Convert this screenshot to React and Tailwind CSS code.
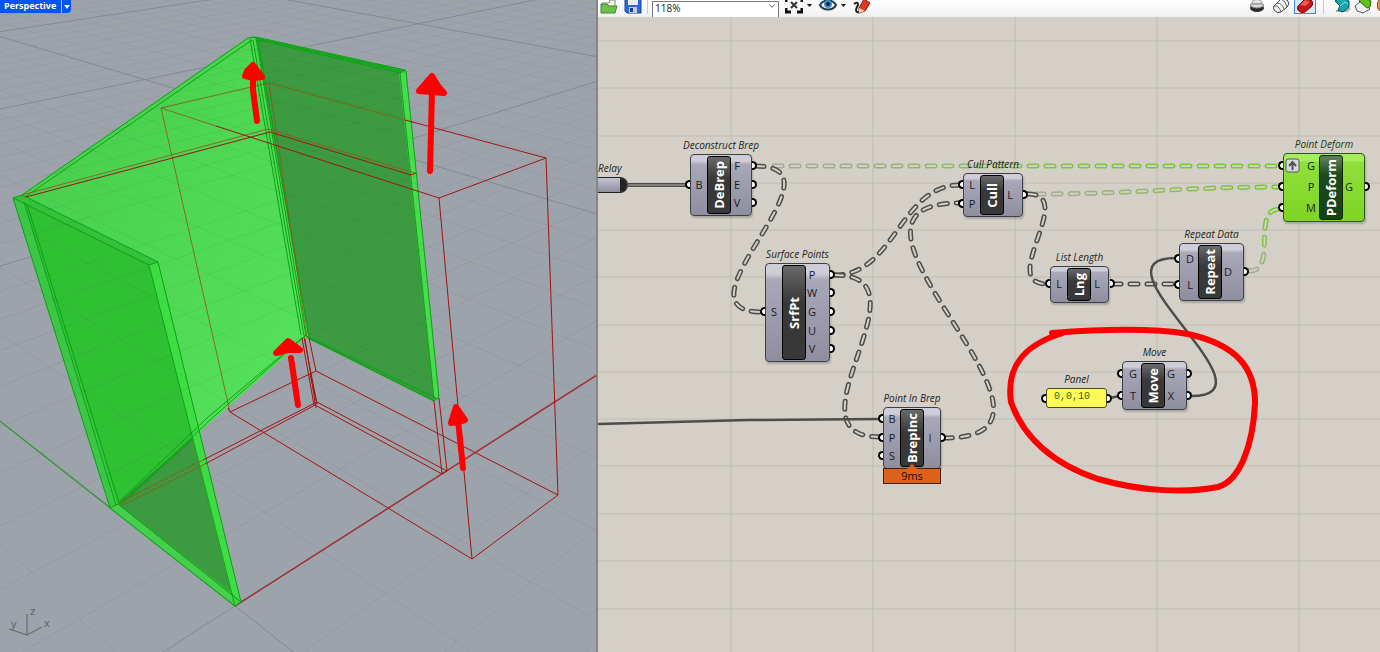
import { ChevronDown } from "lucide-react";

// ground plane: origin, the two vanishing points and the step along each axis
const ORIGIN = [235, 606];
const VP_X = [1490, -195];
const VP_Y = [-786, -197];

const project = (u, v) => {
  const a = u * 0.0741;
  const b = v * 0.0584;
  const d = 1 + a + b;
  return [
    (ORIGIN[0] + a * VP_X[0] + b * VP_Y[0]) / d,
    (ORIGIN[1] + a * VP_X[1] + b * VP_Y[1]) / d,
  ];
};

const segment = (from, to) => {
  const [x1, y1] = project(from[0], from[1]);
  const [x2, y2] = project(to[0], to[1]);
  return `M${x1.toFixed(1)} ${y1.toFixed(1)}L${x2.toFixed(1)} ${y2.toFixed(1)}`;
};

const steps = Array.from({ length: 46 }, (_, i) => i - 5);
const gridPath = (list) =>
  list
    .map((n) => segment([n, -5], [n, 60]) + segment([-5, n], [60, n]))
    .join("");
const minorGrid = gridPath(steps.filter((n) => n % 10 !== 0));
const majorGrid = gridPath(steps.filter((n) => n % 10 === 0 && n > 0));
const axisTails = segment([0, 0], [-5, 0]) + segment([0, 0], [0, -5]);

function Model() {
  return (
    <svg className="absolute inset-0 h-full w-full" aria-hidden="true">
      <defs>
        <linearGradient id="wall" x1="0" y1="0" x2="1" y2="1">
          <stop offset="0" stopColor="#45cb4a" />
          <stop offset="1" stopColor="#58e55e" />
        </linearGradient>
        <linearGradient id="haze" gradientUnits="userSpaceOnUse" x1="0" y1="0" x2="0" y2="300">
          <stop offset="0" stopColor="#8f9299" stopOpacity="0.3" />
          <stop offset="1" stopColor="#8f9299" stopOpacity="0.55" />
        </linearGradient>
      </defs>
      <g fill="none">
        <path d={minorGrid} stroke="url(#haze)" />
        <path d={majorGrid + axisTails} stroke="#7f8289" strokeOpacity="0.8" />
        <path d={segment([0, 0], [20, 0])} stroke="#9c2f36" strokeWidth="1.5" />
        <path d={segment([0, 0], [0, 12])} stroke="#3b9440" strokeWidth="1.5" />
      </g>

      <g stroke="none">
        <polygon points="252,37 405,70 439,398 434,401 306,337" fill="#3c9b40" />
        <polygon points="399,72 406,71 439,397 434,399" fill="#48dc4e" />
        <polygon points="252,37 405,70 400,73 258,41" fill="#2dac32" />
        <polygon points="21,195 248,38 256,38 308,336 118,505" fill="url(#wall)" />
        <polygon points="13,198 22,195 158,262 241,602 235,606 110,508" fill="#2fc033" />
        <polygon points="119,505 193,438 231,592" fill="#3c9b40" />
        <polygon points="13,198 24,202 118,504 110,508" fill="#3dc547" />
        <polygon points="13,198 22,195 158,262 149,265" fill="#36c13d" />
        <polygon points="149,265 158,262 241,602 231,592" fill="#40dc45" />
        <polygon points="110,508 118,504 241,602 235,606" fill="#47ce4d" />
        <polygon points="118,503 193,437 192,441 121,505" fill="#279a2b" />
      </g>

      <g fill="none" stroke="#0aa312">
        <path d="M13 198L22 195L248 38L256 37L405 70L406 71L439 397L434 401L308 338" />
        <path d="M25 197L252 40M258 40L400 73L405 70M252 37L401 71M400 73L434 399" />
        <path d="M250 39L301 335M253 40L304 336M256 38L306 336M258 40L309 337" />
        <path d="M304 335L436 398M308 338L434 401M305 336L210 420M302 338L207 418" />
        <path d="M13 198L149 265L158 262L22 195M13 198L110 508L235 606L241 602L158 262" />
        <path d="M149 265L235 606M24 202L116 505M27 204L119 503M110 508L118 504L241 602" />
        <path d="M118 503L207 418M121 505L210 420" />
      </g>

      {/* ground grid glimpsed through the walls */}
      <clipPath id="walls">
        <path d="M13 198L250 37L405 70L439 398L434 401L306 337L200 430L241 602L235 606L110 508Z" />
      </clipPath>
      <path
        d={minorGrid}
        clipPath="url(#walls)"
        fill="none"
        stroke="#1c6b20"
        strokeOpacity="0.08"
      />

      {/* edges of the untouched boxes seen through the walls */}
      <g fill="none" stroke="#8c5a18" strokeOpacity="0.85">
        <path d="M161 108L269 83L405 120M161 108L230 412M161 108L216 126" />
        <path d="M269 83L307 338M22 195L268 129L415 173" />
        <path d="M118 503L203 460M121 506L205 464" />
      </g>
      <g fill="none" stroke="#a01414">
        <path d="M405 120L546 158L439 198L216 126M546 158L558 495L472 559L439 198" />
        <path d="M26 197L270 132L411 175L416 173" />
        <path d="M228 408L230 412L472 559M558 495L316 371L230 412M309 338L316 371" />
        <path d="M302 338L314 405M304 337L317 404M310 374L317 404M305 339L316 408" />
        <path d="M203 460L317 402L447 471M205 464L315 405L442 474L447 471" />
        <path d="M434 401L442 474M439 398L447 471" />
      </g>

      <g
        fill="#ff0000"
        stroke="#ff0000"
        strokeWidth="6"
        strokeLinecap="round"
        strokeLinejoin="round"
      >
        <path d="M257 121L253 90V76" fill="none" />
        <path d="M253 65L262 77L254 78L245 76L247 71Z" />
        <path d="M430 171L432 90" fill="none" />
        <path d="M432 76L438 86L444 93L432 92L419 91Z" />
        <path d="M298 405L291 358" fill="none" />
        <path d="M288 341L300 350L288 350L276 353Z" />
        <path d="M463 468L458 420" fill="none" />
        <path d="M456 407L465 420L458 422L451 423Z" />
      </g>

      <path d="M9 629L27 635L42 627M27 635V614" fill="none" stroke="#5f6368" />
      <g fill="#5f6368" fontFamily="'Liberation Sans', sans-serif" fontSize="11">
        <text x="30" y="615">z</text>
        <text x="11" y="628">y</text>
        <text x="44" y="627">x</text>
      </g>
    </svg>
  );
}

function Viewport() {
  return (
    <section className="relative overflow-hidden bg-[#9da3aa]">
      <Model />
      <button className="relative flex h-[13px] items-center rounded-br-sm bg-[#0055f8] font-['Open_Sans',sans-serif] text-[9px] font-bold text-white">
        <span className="px-1 pb-px">Perspective</span>
        <span className="ml-px flex h-full w-[10px] items-center justify-center border-l border-[#a8c6ff]">
          <svg width="6" height="4" aria-hidden="true">
            <path d="M0 0H6L3 4Z" fill="#fff" />
          </svg>
        </span>
      </button>
    </section>
  );
}

function ToolButton({ label, className = "", children }) {
  return (
    <button
      aria-label={label}
      className={`flex h-[18px] shrink-0 items-center justify-center overflow-hidden ${className}`}
    >
      <svg width="18" height="18" viewBox="0 0 18 18" className="shrink-0">
        {children}
      </svg>
    </button>
  );
}

function Caret() {
  return (
    <svg width="5" height="18" className="mx-1 shrink-0" aria-hidden="true">
      <path d="M0 8H5L2.5 11Z" fill="#111" />
    </svg>
  );
}

function Toolbar() {
  return (
    <header className="flex h-[17px] shrink-0 items-end overflow-hidden bg-linear-to-b from-white to-[#f0f0f0] pb-[3px]">
      <ToolButton label="Open" className="ml-[2px] w-[18px]">
        <path d="M2 7H9L10 4H15V16H2Z" fill="#f3f3ee" stroke="#7b8a72" />
        <path d="M1 8H7L9 10H17L15 17H1Z" fill="#6fc04a" stroke="#3f8a26" />
      </ToolButton>
      <ToolButton label="Save" className="ml-[6px] w-[18px]">
        <path d="M1 1H17V17H3L1 15Z" fill="#2c68d6" stroke="#143f96" />
        <path d="M4 1H14V9H4Z" fill="#e9eef7" />
        <path d="M5 11H13V17H5Z" fill="#c4c9d2" />
        <path d="M6 12H9V16H6Z" fill="#143f96" />
      </ToolButton>
      <span className="ml-[5px] h-[18px] w-px bg-[#c9c9d2]" />
      <div className="relative ml-[4px] h-5 w-[127px] shrink-0">
        <select
          aria-label="Zoom"
          className="h-5 w-full appearance-none border border-[#7a7a7a] bg-white pb-[7px] pl-[2px] font-['Open_Sans',sans-serif] text-[10px] leading-3 text-[#222]"
        >
          <option>118%</option>
        </select>
        <ChevronDown
          className="pointer-events-none absolute top-[7px] right-[2px] size-[10px] text-[#333]"
          aria-hidden="true"
        />
      </div>
      <ToolButton label="Zoom extents" className="ml-[6px] w-[18px]">
        <path
          d="M1 6V1H6M12 1H17V6M17 12V16H12M6 16H1V12"
          fill="none"
          stroke="#111"
          strokeWidth="3"
        />
        <path d="M6 6L12 12M12 6L6 12" stroke="#333" strokeWidth="2" />
      </ToolButton>
      <Caret />
      <ToolButton label="Named views" className="ml-[3px] w-[18px]">
        <path d="M1 9C4 3 14 3 17 9C14 15 4 15 1 9Z" fill="#f4f8fb" stroke="#1c3d52" strokeWidth="2" />
        <circle cx="9" cy="8" r="4" fill="#3a8fc2" />
        <circle cx="9" cy="8" r="2" fill="#06202f" />
      </ToolButton>
      <Caret />
      <ToolButton label="Sketch" className="ml-[3px] w-[18px]">
        <path d="M1 8C5 5 6 8 4 11C2 15 3 17 8 16" fill="none" stroke="#222" strokeWidth="2" />
        <path d="M6 12L11 3L17 7L12 15L6 17Z" fill="#e03a26" stroke="#7c1a10" />
        <path d="M6 12L12 15L6 17Z" fill="#f3d29b" />
      </ToolButton>

      <div className="ml-auto flex shrink-0 items-end">
        <ToolButton label="No preview" className="w-[18px]">
          <path d="M4 8C3 2 15 2 14 8Z" fill="#e6e6e6" stroke="#888" />
          <ellipse cx="9" cy="12" rx="7" ry="4" fill="#2b2b2b" />
          <path d="M2 9C5 13 13 13 16 9L14 8H4Z" fill="#ddd" stroke="#888" />
        </ToolButton>
        <ToolButton label="Wireframe preview" className="ml-[6px] w-[18px]">
          <path
            d="M2 10L9 3Q12 1 16 5Q18 8 15 11L9 16Q5 18 2 14Q1 12 2 10Z"
            fill="#f4f4f4"
            stroke="#444"
          />
          <path d="M2 10Q7 9 9 16M9 3Q14 5 15 11M5 7Q10 7 12 13" fill="none" stroke="#666" />
        </ToolButton>
        <ToolButton
          label="Shaded preview"
          className="ml-1 w-[22px] border border-[#3b8be0] bg-[#d8e9fb]"
        >
          <path
            d="M2 10L9 3Q12 1 16 5Q18 8 15 11L9 16Q5 18 2 14Q1 12 2 10Z"
            fill="#c91717"
            stroke="#6c0a0a"
          />
          <path d="M4 9L9 4L14 6L9 10Z" fill="#ef5a50" />
        </ToolButton>
        <span className="ml-[7px] h-[18px] w-px bg-[#c9c9d2]" />
        <ToolButton label="Preview settings" className="ml-[9px] w-[18px]">
          <path d="M3 15H14L17 12" fill="none" stroke="#aaa" strokeWidth="2" />
          <path d="M2 5L8 1L16 5V11L10 16L5 14L7 10Z" fill="#18a6b0" stroke="#0b4f55" />
          <path d="M7 10L12 6L15 8" fill="none" stroke="#83e2e8" />
        </ToolButton>
        <ToolButton label="Selected preview" className="ml-[3px] w-[18px]">
          <path d="M1 10L7 5L16 13L9 17L3 15Z" fill="#f0f0f0" stroke="#555" />
          <path d="M5 5L10 1L17 5L16 11L13 12Z" fill="#5fbf1f" stroke="#2b6a09" />
        </ToolButton>
        <ToolButton label="Mesh quality" className="ml-[5px] w-[3px] justify-start">
          <circle cx="7" cy="9" r="7" fill="#f08a2c" stroke="#8a3a08" />
        </ToolButton>
      </div>
    </header>
  );
}

// out: width of the output column
const nodes = [
  { title: "Deconstruct Brep", name: "DeBrep", x: 92, y: 137, w: 62, h: 62, out: 20, inputs: ["B"], outputs: ["F", "E", "V"] },
  { title: "Surface Points", name: "SrfPt", x: 167, y: 246, w: 65, h: 99, out: 23, inputs: ["S"], outputs: ["P", "W", "G", "U", "V"] },
  { title: "Cull Pattern", name: "Cull", x: 365, y: 156, w: 60, h: 44, out: 18, inputs: ["L", "P"], outputs: ["L"] },
  { title: "List Length", name: "Lng", x: 452, y: 249, w: 59, h: 37, out: 18, inputs: ["L"], outputs: ["L"] },
  { title: "Repeat Data", name: "Repeat", x: 581, y: 226, w: 65, h: 58, out: 21, inputs: ["D", "L"], outputs: ["D"] },
  { title: "Point Deform", name: "PDeform", x: 685, y: 136, w: 82, h: 69, out: 21, inputs: ["G", "P", "M"], outputs: ["G"], selected: true },
  { title: "Move", name: "Move", x: 524, y: 344, w: 65, h: 49, out: 21, inputs: ["G", "T"], outputs: ["G", "X"] },
  { title: "Point In Brep", name: "BrepInc", x: 285, y: 390, w: 58, h: 62, out: 16, inputs: ["B", "P", "S"], outputs: ["I"], time: "9ms" },
];

const curve = (x1, y1, x2, y2, h) =>
  `M${x1} ${y1}C${x1 + h} ${y1} ${x2 - h} ${y2} ${x2} ${y2}`;

const treeWires = [
  curve(158, 149, 164, 295, 95),
  curve(237, 258, 362, 168, 60),
  curve(237, 258, 282, 420, 100),
  curve(346, 421, 362, 186, 165),
  curve(430, 177, 449, 267, 50),
  "M515 267H578",
];
const selectedWires = [
  { d: "M176 149H682", stroke: "url(#wire-long)" },
  { d: curve(438, 177, 682, 170, 100), stroke: "url(#wire-mid)" },
  { d: curve(651, 254, 682, 192, 30), stroke: "url(#wire-short)" },
];
const itemWires = [
  curve(593, 379, 578, 241, 92),
  "M0 407L150 403L282 402",
  "M512 381L521 379",
];

function TreeWire({ d, stroke }) {
  return (
    <g fill="none" strokeLinecap="round" strokeDasharray="8 9">
      <path d={d} stroke={stroke} strokeWidth="5" />
      <path d={d} stroke="#d4d0c8" strokeWidth="2" />
    </g>
  );
}

function Wires() {
  return (
    <svg className="absolute inset-0 h-full w-full" aria-hidden="true">
      <defs>
        <linearGradient id="wire-long" gradientUnits="userSpaceOnUse" x1="160" y1="0" x2="682" y2="0">
          <stop offset="0" stopColor="#a7a7a0" />
          <stop offset="0.8" stopColor="#74cc26" />
        </linearGradient>
        <linearGradient id="wire-mid" gradientUnits="userSpaceOnUse" x1="430" y1="0" x2="682" y2="0">
          <stop offset="0" stopColor="#a7a7a0" />
          <stop offset="1" stopColor="#74cc26" />
        </linearGradient>
        <linearGradient id="wire-short" gradientUnits="userSpaceOnUse" x1="650" y1="254" x2="682" y2="192">
          <stop offset="0" stopColor="#a7a7a0" />
          <stop offset="0.8" stopColor="#74cc26" />
        </linearGradient>
      </defs>
      <g stroke="#bfbcb4">
        {[133, 275, 417, 559, 701].map((x) => (
          <line key={x} x1={x} x2={x} y1="0" y2="100%" />
        ))}
        {[24, 71, 119, 166, 213, 260, 308, 355, 402, 449, 497, 544, 592].map((y) => (
          <line key={y} x1="0" x2="100%" y1={y} y2={y} />
        ))}
      </g>
      {selectedWires.map((w) => (
        <TreeWire key={w.d} d={w.d} stroke={w.stroke} />
      ))}
      {treeWires.map((d) => (
        <TreeWire key={d} d={d} stroke="#4c4c4a" />
      ))}
      <path d="M30 168H90" stroke="#4c4c4a" strokeWidth="4" />
      <path d="M30 168H90" stroke="#b5b2aa" />
      {itemWires.map((d) => (
        <path key={d} d={d} fill="none" stroke="#4c4c4a" strokeWidth="2.5" />
      ))}
    </svg>
  );
}

function Grip({ side }) {
  return (
    <span
      className={
        side === "left"
          ? "absolute right-full mr-px h-[9px] w-[5px] rounded-l-full border-2 border-r-0 border-black bg-white"
          : "absolute left-full ml-px h-[9px] w-[5px] rounded-r-full border-2 border-l-0 border-black bg-white"
      }
    />
  );
}

function Ports({ names, side }) {
  return (
    <ul className="relative flex flex-1 flex-col pt-px pb-[3px]">
      {names.map((name, i) => (
        <li
          key={i}
          className={`relative flex flex-1 items-center text-[11px] leading-none text-[#1b1b1b] ${
            side === "left" ? "justify-end" : "justify-start"
          }`}
        >
          <Grip side={side} />
          <span className={side === "left" ? "w-4 text-center" : "w-3 text-center"}>
            {name}
          </span>
        </li>
      ))}
    </ul>
  );
}

function Node({ node }) {
  return (
    <article
      className={`absolute flex rounded-[4px] border shadow-[1px_2px_2px_rgba(0,0,0,0.2)] ${
        node.selected
          ? "border-[#2d5a10] bg-linear-to-b from-[#a6ee5c] from-10% via-[#8fe03a] via-12% to-[#7fd424]"
          : "border-[#3f3f47] bg-linear-to-b from-[#cfced8] from-10% via-[#a9a8b8] via-16% to-[#8f8e9f]"
      }`}
      style={{ left: node.x, top: node.y, width: node.w, height: node.h }}
    >
      <h2
        className={`absolute bottom-full left-1/2 -translate-x-1/2 pb-[2px] text-[10px] leading-4 whitespace-nowrap italic ${
          node.selected ? "text-[#173a12]" : "text-[#222]"
        }`}
      >
        {node.title}
      </h2>
      {node.selected && (
        <svg className="absolute top-1 left-px" width="15" height="15" aria-hidden="true">
          <rect x="1" y="1" width="13" height="13" rx="2" fill="#d7d7de" stroke="#555" />
          <path d="M7.500 12V5M4 8L7.500 4L11 8" fill="none" stroke="#555" strokeWidth="2" />
        </svg>
      )}
      <Ports names={node.inputs} side="left" />
      <div
        className={`my-px flex w-6 shrink-0 items-center justify-center overflow-hidden rounded-[3px] border ${
          node.selected
            ? "border-[#0c2a0c] bg-linear-to-b from-[#5b7a55] from-5% via-[#1c4a1c] via-30% to-[#174217]"
            : "border-black bg-linear-to-b from-[#6a6a6a] to-[#383838] to-40%"
        }`}
      >
        <span className="rotate-180 text-[13px] leading-none font-bold whitespace-nowrap text-white [writing-mode:vertical-rl]">
          {node.name}
        </span>
      </div>
      <div className="flex shrink-0" style={{ width: node.out }}>
        <Ports names={node.outputs} side="right" />
      </div>
      {node.time && (
        <p className="absolute -inset-x-px top-full h-4 border border-[#4a1f05] bg-[#dd631c] text-center text-[11px] leading-[14px] text-[#1d0c02]">
          <svg className="absolute bottom-full left-1/2 -ml-[5px]" width="10" height="5" aria-hidden="true">
            <path d="M0 5L5 0L10 5Z" fill="#dd631c" />
          </svg>
          {node.time}
        </p>
      )}
    </article>
  );
}

function Canvas() {
  return (
    <main className="relative flex-1 overflow-hidden bg-[#d4d0c8]">
      <Wires />

      <div className="absolute top-[160px] left-0 h-4 w-[30px] rounded-r-lg border border-l-0 border-[#222] bg-linear-to-b from-[#c4c3d0] to-[#8f8e9f]">
        <h2 className="absolute bottom-full left-0 pb-[2px] text-[10px] leading-4 text-[#222] italic">
          Relay
        </h2>
        <span className="absolute inset-y-0 right-0 w-[7px] rounded-r-lg bg-[#222]" />
      </div>

      <div className="absolute top-[371px] left-[448px] flex h-5 w-[61px] items-center rounded-[3px] border border-[#4a4a20] bg-[#fffa5a] pl-[7px]">
        <h2 className="absolute bottom-full left-1/2 -translate-x-1/2 pb-[2px] text-[10px] leading-4 text-[#222] italic">
          Panel
        </h2>
        <Grip side="left" />
        <span className="pb-[3px] font-['Liberation_Mono',monospace] text-[10px] leading-none text-[#2f6b10]">
          0,0,10
        </span>
        <Grip side="right" />
      </div>

      {nodes.map((node) => (
        <Node key={node.name} node={node} />
      ))}

      {/* hand drawn mark around the move vector */}
      <svg className="pointer-events-none absolute inset-0 h-full w-full" aria-hidden="true">
        <path
          d="M454 316C520 311 560 312 590 317C640 328 657 352 657 386C655 430 641 464 620 470C590 476 545 475 500 462C455 447 425 420 413 385C408 350 425 328 465 316"
          fill="none"
          stroke="#ff0000"
          strokeWidth="6"
          strokeLinecap="round"
        />
      </svg>
    </main>
  );
}

export default function App() {
  return (
    <div className="grid h-screen grid-cols-[596fr_784fr] overflow-hidden font-['Open_Sans','Noto_Sans',sans-serif]">
      <Viewport />
      <div className="flex min-w-0 flex-col border-l-2 border-[#858585]">
        <Toolbar />
        <Canvas />
      </div>
    </div>
  );
}
